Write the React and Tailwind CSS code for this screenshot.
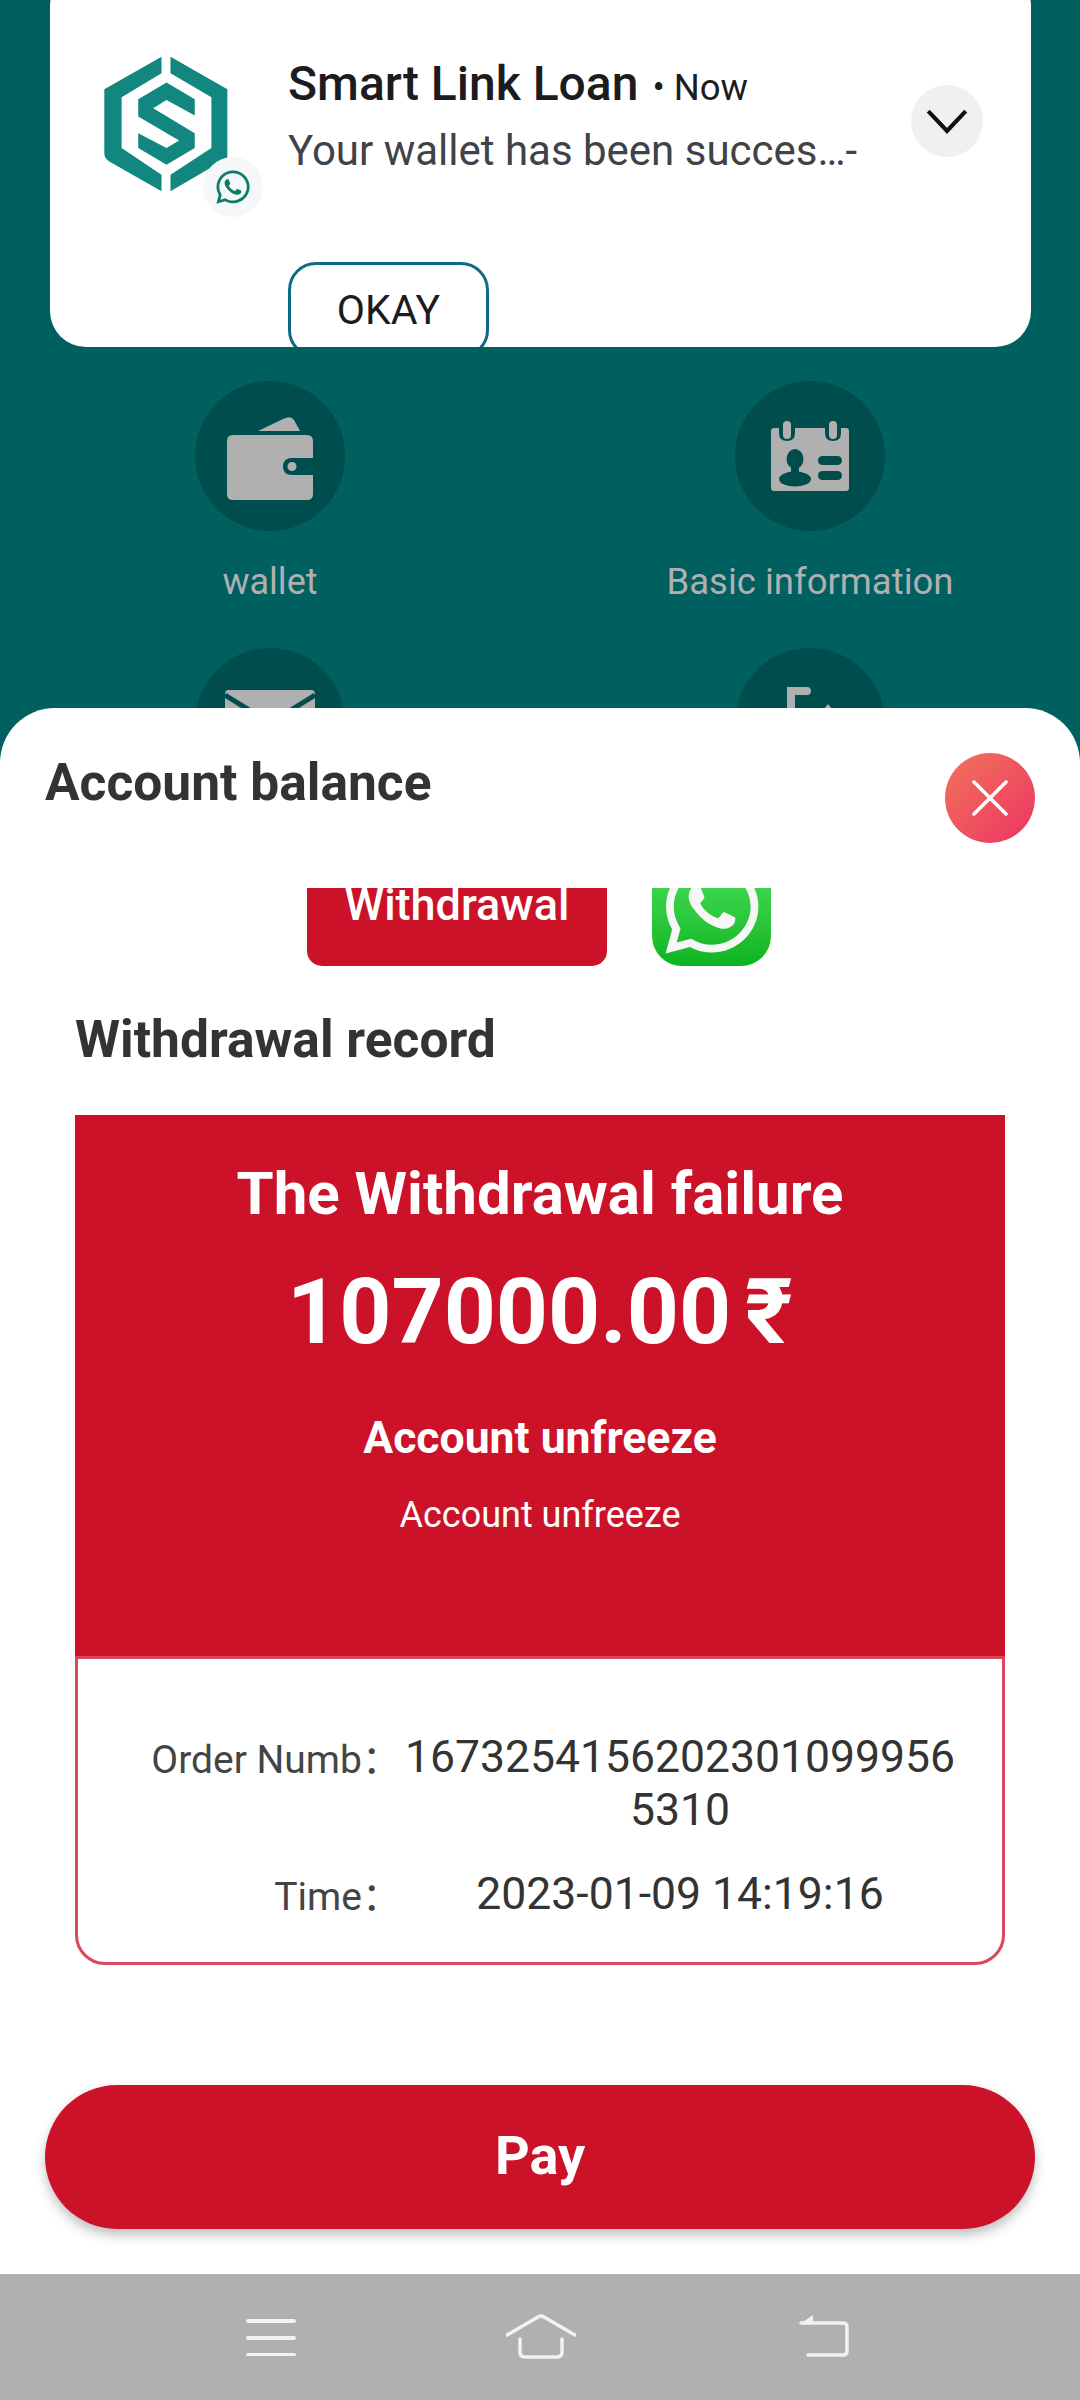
import React from 'react';
import { FaWhatsapp } from 'react-icons/fa';

const WalletIcon = () => (
  <svg viewBox="0 0 86 84" className="w-[86px] h-[84px] mt-[6px]">
    <path d="M31 14 L56 2 Q64 -2 67 3 L73 14 Z" fill="#b0b0b0" />
    <path d="M6 18 H80 Q86 18 86 24 V41 H65 Q56 41 56 49.5 Q56 58 65 58 H86 V77 Q86 83 80 83 H6 Q0 83 0 77 V24 Q0 18 6 18 Z" fill="#b0b0b0" />
    <circle cx="65" cy="49.5" r="4.5" fill="#b0b0b0" />
  </svg>
);

const CardIcon = () => (
  <svg viewBox="0 0 78 70" className="w-[78px] h-[70px]">
    <path d="M0 10 Q0 7 3 7 H8 V12 Q8 20 16 20 Q24 20 24 12 V7 H54 V12 Q54 20 62 20 Q70 20 70 12 V7 H75 Q78 7 78 10 V67 Q78 70 75 70 H3 Q0 70 0 67 Z" fill="#b0b0b0" />
    <rect x="12" y="0" width="8" height="18" rx="4" fill="#b0b0b0" />
    <rect x="58" y="0" width="8" height="18" rx="4" fill="#b0b0b0" />
    <ellipse cx="24" cy="38" rx="8.5" ry="10" fill="#004d4d" />
    <rect x="20" y="44" width="8" height="12" fill="#004d4d" />
    <ellipse cx="24" cy="58" rx="16" ry="7.5" fill="#004d4d" />
    <rect x="47" y="35" width="24" height="9" rx="4.5" fill="#004d4d" />
    <rect x="47" y="50" width="24" height="9" rx="4.5" fill="#004d4d" />
  </svg>
);

const MailIcon = () => (
  <svg viewBox="0 0 90 66" className="w-[90px] h-[66px] mt-[42px]">
    <rect x="0" y="0" width="90" height="66" rx="4" fill="#b0b0b0" />
    <path d="M0 5 L45 33 L90 5" fill="none" stroke="#004d4d" strokeWidth="5" />
  </svg>
);

const ExitIcon = () => (
  <svg viewBox="0 0 90 66" className="w-[90px] h-[66px] mt-[39px]">
    <path d="M42 4 H26 V66" fill="none" stroke="#b0b0b0" strokeWidth="8" strokeLinecap="round" />
    <path d="M55 27 L63 17 L71 27 Z" fill="#b0b0b0" />
  </svg>
);

const SLogo = () => (
  <svg viewBox="130 105 380 415" className="w-[127px] h-[138px] -mt-[2px]">
    <path d="M305 110 V160 L185 232 V385 L305 465 V515 L148 425 Q133 416 133 400 V208 Z" fill="#12877f" />
    <path d="M332 110 V160 L455 232 V385 L332 465 V515 L503 415 V208 Z" fill="#12877f" />
    <path d="M320 188 L405 238 V287 L320 240 L280 265 L405 340 V385 L320 435 L235 385 V340 L320 385 L358 362 L235 290 V238 Z" fill="#12877f" />
  </svg>
);

const NavBar = () => (
  <div className="h-[126px] shrink-0 bg-[#b0b0b0] flex items-start pl-[246px] pt-[40px]">
    <svg viewBox="0 0 50 38" className="w-[50px] h-[38px] mt-[4px]" fill="none" stroke="#f2f2f2" strokeWidth="4" strokeLinecap="round">
      <path d="M2 3 H48 M2 20 H48 M2 37 H48" />
    </svg>
    <svg viewBox="0 0 70 45" className="w-[70px] h-[45px] ml-[210px]" fill="none" stroke="#f2f2f2" strokeWidth="3.5" strokeLinecap="round" strokeLinejoin="round">
      <path d="M1 21 L32 3 Q35 1 38 3 L69 21" />
      <path d="M14 25 V38 Q14 43 19 43 H51 Q56 43 56 38 V25" />
    </svg>
    <svg viewBox="0 0 50 42" className="w-[50px] h-[42px] ml-[223px] mt-[1px]" fill="none" stroke="#f2f2f2" strokeWidth="3.5" strokeLinecap="round">
      <path d="M2 8 H44 Q48 8 48 12 V36 Q48 40 44 40 H9" />
      <path d="M14 0 V9 H1 Z" fill="#f2f2f2" stroke="none" />
    </svg>
  </div>
);

const Notification = () => (
  <div className="absolute left-[50px] top-[-30px] w-[981px] h-[377px] bg-white rounded-[36px] overflow-hidden flex items-start pl-[53px] pr-[48px] pt-[87px]">
    <div className="relative w-[127px] h-[138px] shrink-0">
      <SLogo />
      <div className="absolute left-[100px] top-[100px] w-[60px] h-[60px] rounded-full bg-[#f6f7f9] flex items-center justify-center">
        <FaWhatsapp className="w-[38px] h-[38px] text-[#0a7e68]" />
      </div>
    </div>
    <div className="ml-[58px] flex-1 pt-[1px]">
      <div className="flex items-baseline h-[52px] leading-[52px]">
        <span className="text-[48px] font-medium text-[#1c1c1e]">Smart Link Loan</span>
        <span className="text-[36.5px] text-[#1c1c1e] ml-[14px]">• Now</span>
      </div>
      <div className="mt-[17px] text-[42px] leading-[48px] text-[#3f4347]">Your wallet has been succes…-</div>
      <div className="mt-[87px] w-[201px] h-[96px] pt-[2px] border-[3px] border-[#0f6a88] rounded-[28px] flex items-center justify-center text-[41px] text-[#1c1c1e]">OKAY</div>
    </div>
    <div className="w-[72px] h-[72px] mt-[28px] rounded-full bg-[#f0f0f2] flex items-center justify-center shrink-0">
      <svg viewBox="0 0 40 24" className="w-[42px] h-[25px]" fill="none" stroke="#111111" strokeWidth="4">
        <path d="M2 2 L20 21 L38 2" />
      </svg>
    </div>
  </div>
);

const Sheet = () => (
  <div className="absolute inset-x-0 top-[708px] bottom-0 bg-white rounded-t-[55px] flex flex-col">
    <div className="h-[180px] shrink-0 flex items-start justify-between px-[45px]">
      <h2 className="mt-[47px] text-[51.5px] leading-[56px] font-bold text-[#333333]">Account balance</h2>
      <div className="mt-[45px] w-[90px] h-[90px] rounded-full bg-gradient-to-br from-[#f2705c] to-[#ec3060] flex items-center justify-center">
        <svg viewBox="0 0 36 36" className="w-[36px] h-[36px]" fill="none" stroke="white" strokeWidth="3.5" strokeLinecap="round">
          <path d="M2 2 L34 34 M34 2 L2 34" />
        </svg>
      </div>
    </div>

    <div className="h-[78px] shrink-0 overflow-hidden flex items-end pl-[307px] gap-[45px]">
      <div className="w-[300px] h-[120px] shrink-0 bg-[#cb1228] rounded-b-[15px] text-white text-[45px] font-medium text-center leading-[52px]">
        <div className="pt-[33px]">Withdrawal</div>
      </div>
      <div className="w-[119px] h-[119px] shrink-0 rounded-[30px] bg-gradient-to-b from-[#4ce660] to-[#0ab41f] flex items-center justify-center">
        <FaWhatsapp className="w-[106px] h-[106px] text-[#f7f7f7]" />
      </div>
    </div>

    <h2 className="mt-[46px] ml-[75px] text-[51.5px] leading-[56px] font-bold text-[#333333]">Withdrawal record</h2>

    <div className="mt-[47px] mx-[75px]">
      <div className="h-[541px] bg-[#cb1228] text-white flex flex-col items-center pt-[41px]">
        <div className="text-[60px] leading-[76px] font-bold">The Withdrawal failure</div>
        <div className="mt-[28px] text-[91px] leading-[104px] font-bold">107000.00<span className="ml-[14px]">₹</span></div>
        <div className="mt-[46px] text-[44.5px] leading-[56px] font-bold">Account unfreeze</div>
        <div className="mt-[27px] text-[36px] leading-[44px]">Account unfreeze</div>
      </div>
      <div className="h-[309px] border-[3px] border-[#d9485c] rounded-b-[30px] pt-[72px]">
        <div className="flex items-start">
          <div className="w-[323px] text-right text-[39px] leading-[51px] text-[#444444] shrink-0">Order Numb<span className="font-['Noto_Sans_CJK_SC']">：</span></div>
          <div className="w-[558px] text-center text-[44.5px] leading-[53px] text-[#333333] break-all">16732541562023010999565310</div>
        </div>
        <div className="flex items-start mt-[31px]">
          <div className="w-[323px] text-right text-[39px] leading-[51px] text-[#444444] shrink-0">Time<span className="font-['Noto_Sans_CJK_SC']">：</span></div>
          <div className="w-[558px] text-center text-[44.5px] leading-[53px] text-[#333333]">2023-01-09 14:19:16</div>
        </div>
      </div>
    </div>

    <button className="mt-auto mb-[45px] mx-[45px] h-[144px] shrink-0 rounded-full bg-[#cb1228] text-white text-[54px] font-bold pb-[4px] shadow-[0_6px_12px_rgba(0,0,0,0.25)]">Pay</button>
  </div>
);

const App = () => {
  return (
    <div className="w-[1080px] h-[2400px] flex flex-col overflow-hidden bg-[#005f5f] font-[family-name:Roboto,sans-serif]">
      <div className="relative flex-1 overflow-hidden">
        <div className="pt-[381px] grid grid-cols-2">
          <div className="flex flex-col items-center">
            <div className="w-[150px] h-[150px] rounded-full bg-[#004d4d] flex items-center justify-center"><WalletIcon /></div>
            <span className="mt-[29px] text-[36px] leading-[44px] text-[#b0b0b0]">wallet</span>
          </div>
          <div className="flex flex-col items-center">
            <div className="w-[150px] h-[150px] rounded-full bg-[#004d4d] flex items-center justify-center"><CardIcon /></div>
            <span className="mt-[29px] text-[36.5px] leading-[44px] text-[#b0b0b0]">Basic information</span>
          </div>
          <div className="mt-[44px] flex justify-center">
            <div className="w-[150px] h-[150px] rounded-full bg-[#004d4d] flex justify-center items-start"><MailIcon /></div>
          </div>
          <div className="mt-[44px] flex justify-center">
            <div className="w-[150px] h-[150px] rounded-full bg-[#004d4d] flex justify-center items-start"><ExitIcon /></div>
          </div>
        </div>
        <Notification />
        <Sheet />
      </div>
      <NavBar />
    </div>
  );
};

export default App;
